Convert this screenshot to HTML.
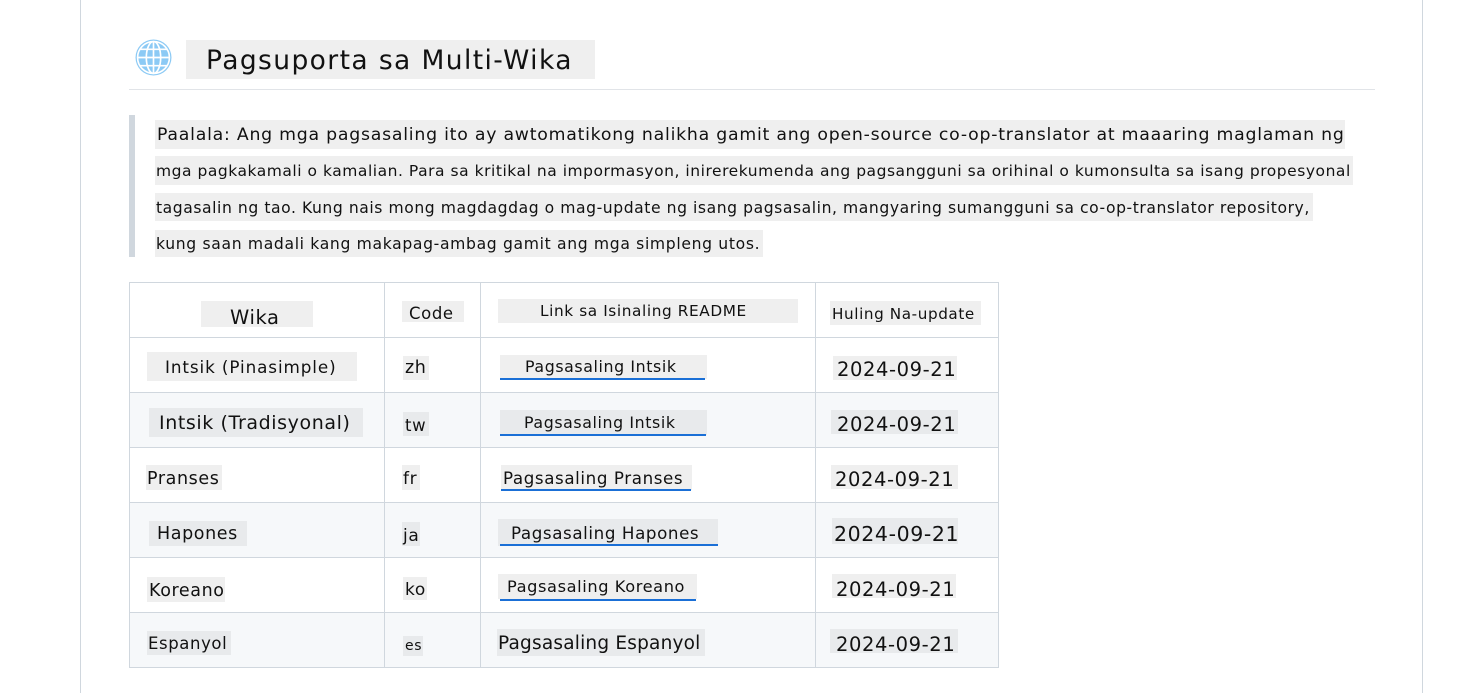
<!DOCTYPE html>
<html><head><meta charset="utf-8"><style>
body{margin:0;width:1482px;height:693px;background:#fff;position:relative;overflow:hidden;font-family:"DejaVu Sans","Liberation Sans",sans-serif;color:#111;letter-spacing:0.6px}
.a{position:absolute;white-space:nowrap;background:#efefef;box-sizing:border-box;overflow:hidden}
.s{background:#e8eaec}
.u{position:absolute;height:2px;background:#1a6fd6}
.row{position:absolute;left:129px;width:870px;height:55px;border-top:1px solid #d0d7de;box-sizing:border-box}
.v{position:absolute;top:282px;height:386px;width:1px;background:#d0d7de}
</style></head><body>
<div style="position:absolute;left:80px;top:0;width:1px;height:693px;background:#d0d7de"></div>
<div style="position:absolute;left:1422px;top:0;width:1px;height:693px;background:#d0d7de"></div>

<svg style="position:absolute;left:135px;top:39px" width="37" height="37" viewBox="0 0 36 36">
<circle cx="18" cy="18" r="17.5" fill="#8ccaf5"/>
<g fill="none" stroke="#fff" stroke-width="1.6"><circle cx="18" cy="18" r="15.5"/><ellipse cx="18" cy="18" rx="7" ry="15.5"/><line x1="18" y1="2.5" x2="18" y2="33.5"/><line x1="2.5" y1="18" x2="33.5" y2="18"/><path d="M5 10H31M5 26H31"/></g></svg>
<div class="a" style="left:186px;top:40px;width:409px;height:39px;font-size:26.5px;line-height:42px;padding-left:20px;letter-spacing:1.4px">Pagsuporta sa Multi-Wika</div>
<div style="position:absolute;left:129px;top:89px;width:1246px;height:1px;background:#e1e4e8"></div>

<div style="position:absolute;left:129px;top:115px;width:6px;height:142px;background:#d0d7de"></div>
<div class="a" style="left:155px;top:120px;width:1190px;height:29px;font-size:17.3px;line-height:30px;padding-left:2px;letter-spacing:0.77px">Paalala: Ang mga pagsasaling ito ay awtomatikong nalikha gamit ang open-source co-op-translator at maaaring maglaman ng</div>
<div class="a" style="left:155px;top:156px;width:1198px;height:29px;font-size:15.5px;line-height:30px;padding-left:1px;letter-spacing:0.53px">mga pagkakamali o kamalian. Para sa kritikal na impormasyon, inirerekumenda ang pagsangguni sa orihinal o kumonsulta sa isang propesyonal</div>
<div class="a" style="left:155px;top:193px;width:1158px;height:28px;font-size:15.6px;line-height:30px;padding-left:1px;letter-spacing:0.56px">tagasalin ng tao. Kung nais mong magdagdag o mag-update ng isang pagsasalin, mangyaring sumangguni sa co-op-translator repository,</div>
<div class="a" style="left:155px;top:230px;width:608px;height:27px;font-size:15.6px;line-height:28px;padding-left:1px;letter-spacing:0.66px">kung saan madali kang makapag-ambag gamit ang mga simpleng utos.</div>

<div class="row" style="top:282px;border-left:1px solid #d0d7de;border-right:1px solid #d0d7de;background:#fff"></div>
<div class="row" style="top:337px;border-left:1px solid #d0d7de;border-right:1px solid #d0d7de;background:#fff"></div>
<div class="row" style="top:392px;border-left:1px solid #d0d7de;border-right:1px solid #d0d7de;background:#f6f8fa"></div>
<div class="row" style="top:447px;border-left:1px solid #d0d7de;border-right:1px solid #d0d7de;background:#fff"></div>
<div class="row" style="top:502px;border-left:1px solid #d0d7de;border-right:1px solid #d0d7de;background:#f6f8fa"></div>
<div class="row" style="top:557px;border-left:1px solid #d0d7de;border-right:1px solid #d0d7de;background:#fff"></div>
<div class="row" style="top:612px;border-left:1px solid #d0d7de;border-right:1px solid #d0d7de;border-bottom:1px solid #d0d7de;height:56px;background:#f6f8fa"></div>
<div class="v" style="left:384px"></div><div class="v" style="left:480px"></div><div class="v" style="left:815px"></div>

<div class="a" style="left:201px;top:301px;width:112px;height:26px;font-size:19.5px;line-height:34px;padding-left:29px">Wika</div>
<div class="a" style="left:402px;top:301px;width:62px;height:21px;font-size:16.5px;line-height:26px;padding-left:7px">Code</div>
<div class="a" style="left:498px;top:299px;width:300px;height:24px;font-size:15.3px;line-height:25px;padding-left:42px">Link sa Isinaling README</div>
<div class="a" style="left:830px;top:301px;width:151px;height:24px;font-size:15.2px;line-height:26px;padding-left:2px">Huling Na-update</div>

<div class="a" style="left:147px;top:352px;width:210px;height:29px;font-size:16.8px;line-height:31px;padding-left:18px;letter-spacing:0.9px">Intsik (Pinasimple)</div>
<div class="a" style="left:403px;top:356px;width:26px;height:24px;font-size:17.5px;line-height:25px;padding-left:2px">zh</div>
<div class="a" style="left:500px;top:355px;width:207px;height:24px;font-size:15.8px;line-height:24px;padding-left:25px">Pagsasaling Intsik</div><div class="u" style="left:500px;top:378px;width:205px"></div>
<div class="a" style="left:833px;top:356px;width:124px;height:24px;font-size:19.5px;line-height:28px;padding-left:4px">2024-09-21</div>

<div class="a s" style="left:149px;top:408px;width:214px;height:29px;font-size:19px;line-height:31px;padding-left:10px">Intsik (Tradisyonal)</div>
<div class="a s" style="left:403px;top:412px;width:26px;height:24px;font-size:16.5px;line-height:28px;padding-left:2px">tw</div>
<div class="a s" style="left:500px;top:410px;width:207px;height:25px;font-size:15.8px;line-height:25px;padding-left:24px">Pagsasaling Intsik</div><div class="u" style="left:500px;top:434px;width:206px"></div>
<div class="a s" style="left:831px;top:410px;width:127px;height:24px;font-size:19.5px;line-height:30px;padding-left:6px">2024-09-21</div>

<div class="a" style="left:146px;top:465px;width:76px;height:25px;font-size:17.5px;line-height:29px;padding-left:1px">Pranses</div>
<div class="a" style="left:402px;top:465px;width:18px;height:25px;font-size:17px;line-height:29px;padding-left:1px">fr</div>
<div class="a" style="left:501px;top:465px;width:191px;height:25px;font-size:16.7px;line-height:27px;padding-left:2px">Pagsasaling Pranses</div><div class="u" style="left:501px;top:489px;width:190px"></div>
<div class="a" style="left:831px;top:465px;width:127px;height:24px;font-size:19.5px;line-height:29px;padding-left:4px">2024-09-21</div>

<div class="a s" style="left:149px;top:521px;width:98px;height:25px;font-size:17.5px;line-height:27px;padding-left:8px">Hapones</div>
<div class="a s" style="left:402px;top:522px;width:18px;height:24px;font-size:17px;line-height:28px;padding-left:1px">ja</div>
<div class="a s" style="left:498px;top:519px;width:220px;height:27px;font-size:16.7px;line-height:28px;padding-left:13px">Pagsasaling Hapones</div><div class="u" style="left:500px;top:544px;width:218px"></div>
<div class="a s" style="left:832px;top:518px;width:126px;height:26px;font-size:20.5px;line-height:32px;padding-left:2px">2024-09-21</div>

<div class="a" style="left:147px;top:577px;width:78px;height:25px;font-size:17.5px;line-height:28px;padding-left:2px">Koreano</div>
<div class="a" style="left:403px;top:577px;width:24px;height:23px;font-size:17px;line-height:26px;padding-left:2px">ko</div>
<div class="a" style="left:498px;top:574px;width:199px;height:25px;font-size:16.2px;line-height:25px;padding-left:9px">Pagsasaling Koreano</div><div class="u" style="left:500px;top:599px;width:196px"></div>
<div class="a" style="left:832px;top:574px;width:124px;height:24px;font-size:19.5px;line-height:31px;padding-left:4px">2024-09-21</div>

<div class="a s" style="left:147px;top:631px;width:84px;height:24px;font-size:16.5px;line-height:25px;padding-left:1px">Espanyol</div>
<div class="a s" style="left:403px;top:636px;width:20px;height:20px;font-size:14px;line-height:20px;padding-left:2px">es</div>
<div class="a s" style="left:497px;top:629px;width:208px;height:27px;font-size:18.5px;line-height:29px;padding-left:1px;letter-spacing:0.2px">Pagsasaling Espanyol</div>
<div class="a s" style="left:830px;top:629px;width:128px;height:24px;font-size:19.5px;line-height:31px;padding-left:6px">2024-09-21</div>
</body></html>
